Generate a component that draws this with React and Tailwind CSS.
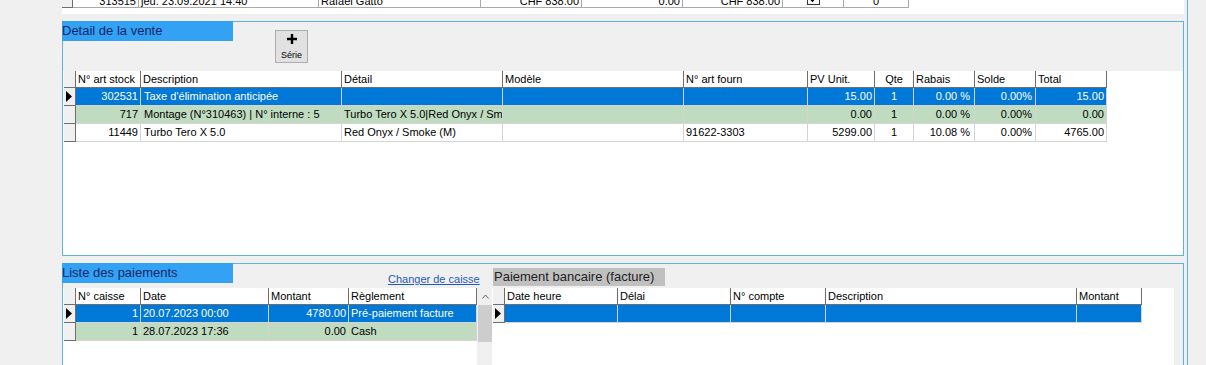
import React from 'react';

const Arrow = () => (
  <svg width="6" height="11" viewBox="0 0 6 11" className="block">
    <path d="M0 0L6 5.5L0 11Z" fill="#000" />
  </svg>
);

const RowMark = ({ mark }) => (
  <div className="w-[12px] h-[18px] shrink-0 bg-[#f0f0f0] border-r border-b border-[#6e6e6e] flex items-center pl-[2px]">
    {mark && <Arrow />}
  </div>
);

const Grid = ({ cols, rows }) => (
  <div className="pl-px">
    <div className="flex w-fit h-[17px]">
      <div className="w-[12px] shrink-0 bg-[#f0f0f0] border-r border-b border-[#6e6e6e]" />
      {cols.map((c) => (
        <div
          key={c.label}
          className={`${c.w} shrink-0 border-r border-b border-[#6e6e6e] bg-white px-[2px] leading-[16px] overflow-hidden whitespace-nowrap ${c.head || ''}`}
        >
          {c.label}
        </div>
      ))}
    </div>
    {rows.map((r, i) => (
      <div key={i} className={`flex w-fit h-[18px] ${r.bg}`}>
        <RowMark mark={r.mark} />
        {cols.map((c, j) => (
          <div
            key={j}
            className={`${c.w} shrink-0 border-r border-b border-[#d4d4d4] px-[2px] leading-[17px] overflow-hidden whitespace-nowrap ${c.align || ''}`}
          >
            {r.cells[j]}
          </div>
        ))}
      </div>
    ))}
  </div>
);

const detailCols = [
  { label: 'N° art stock', w: 'w-[65px]', align: 'text-right' },
  { label: 'Description', w: 'w-[201px]', align: 'pl-[3px]' },
  { label: 'Détail', w: 'w-[161px]' },
  { label: 'Modèle', w: 'w-[181px]' },
  { label: 'N° art fourn', w: 'w-[124px]' },
  { label: 'PV Unit.', w: 'w-[67px]', align: 'text-right' },
  { label: 'Qte', w: 'w-[39px]', align: 'text-center', head: 'text-center' },
  { label: 'Rabais', w: 'w-[61px]', align: 'text-right pr-[4px]' },
  { label: 'Solde', w: 'w-[61px]', align: 'text-right pr-[3px]' },
  { label: 'Total', w: 'w-[71px]', align: 'text-right' },
];

const detailRows = [
  {
    bg: 'bg-[#0078d7] text-white',
    mark: true,
    cells: ['302531', "Taxe d'élimination anticipée", '', '', '', '15.00', '1', '0.00 %', '0.00%', '15.00'],
  },
  {
    bg: 'bg-[#c0dcc0]',
    cells: ['717', 'Montage (N°310463) | N° interne : 5', 'Turbo Tero X 5.0|Red Onyx / Smoke (M)', '', '', '0.00', '1', '0.00 %', '0.00%', '0.00'],
  },
  {
    bg: 'bg-white',
    cells: ['11449', 'Turbo Tero X 5.0', 'Red Onyx / Smoke (M)', '', '91622-3303', '5299.00', '1', '10.08 %', '0.00%', '4765.00'],
  },
];

const payCols = [
  { label: 'N° caisse', w: 'w-[65px]', align: 'text-right' },
  { label: 'Date', w: 'w-[128px]' },
  { label: 'Montant', w: 'w-[80px]', align: 'text-right' },
  { label: 'Règlement', w: 'w-[128px]' },
];

const payRows = [
  { bg: 'bg-[#0078d7] text-white', mark: true, cells: ['1', '20.07.2023 00:00', '4780.00', 'Pré-paiement facture'] },
  { bg: 'bg-[#c0dcc0]', cells: ['1', '28.07.2023 17:36', '0.00', 'Cash'] },
];

const bankCols = [
  { label: 'Date heure', w: 'w-[113px]' },
  { label: 'Délai', w: 'w-[113px]' },
  { label: 'N° compte', w: 'w-[95px]' },
  { label: 'Description', w: 'w-[251px]' },
  { label: 'Montant', w: 'w-[65px]' },
];

const bankRows = [{ bg: 'bg-[#0078d7] text-white', mark: true, cells: ['', '', '', '', ''] }];

const TopRow = () => (
  <div className="h-[14px] shrink-0 w-[1122px] bg-white overflow-hidden">
    <div className="-mt-[10px] flex w-fit h-[18px]">
      <div className="w-[11px] shrink-0 bg-[#f0f0f0] border-r border-b border-[#6e6e6e]" />
      {[
        ['w-[66px] text-right', '313515'],
        ['w-[180px]', 'jeu. 23.09.2021 14:40'],
        ['w-[162px]', 'Rafael Gatto'],
        ['w-[101px] text-right', 'CHF 838.00'],
        ['w-[101px] text-right', '0.00'],
        ['w-[100px] text-right', 'CHF 838.00'],
      ].map(([cls, txt], i) => (
        <div key={i} className={`${cls} shrink-0 border-r border-b border-[#a9a9a9] px-[2px] pt-[3px] leading-[17px] overflow-hidden whitespace-nowrap`}>
          {txt}
        </div>
      ))}
      <div className="w-[61px] shrink-0 border-r border-b border-[#a9a9a9] flex justify-center pt-[2px]">
        <svg width="13" height="13" viewBox="0 0 13 13">
          <rect x="0.5" y="0.5" width="12" height="12" fill="#fff" stroke="#333" />
          <path d="M3 6.5L5.5 9L10 3.5" fill="none" stroke="#000" strokeWidth="1.6" />
        </svg>
      </div>
      <div className="w-[65px] shrink-0 border-r border-b border-[#a9a9a9] text-center pt-[3px] leading-[17px] overflow-hidden">0</div>
    </div>
  </div>
);

export default function App() {
  return (
    <div className="w-[1206px] h-[365px] overflow-hidden bg-[#f0f0f0] font-['Liberation_Sans',Arial,sans-serif] text-[11px] text-black">
      <div className="ml-[62px] w-[1126px] h-full border-r border-[#62b0dc] flex flex-col">
        <TopRow />
        <div className="h-[7px] shrink-0" />

        {/* Detail de la vente */}
        <div className="w-[1122px] h-[235px] shrink-0 border border-[#62b0dc] flex flex-col">
          <div className="flex items-start">
            <div className="-mt-px -ml-px w-[171px] h-[20px] bg-[#33a2f4] text-[13px] leading-[20px] text-[#132766]">
              Detail de la vente
            </div>
            <button className="ml-[42px] mt-[8px] w-[33px] h-[33px] bg-[#e1e1e1] border border-[#adadad] flex flex-col items-center pt-[3px]">
              <svg width="10" height="10" viewBox="0 0 10 10">
                <path d="M5 0V10M0 5H10" stroke="#000" strokeWidth="2.4" />
              </svg>
              <span className="text-[9px] leading-[11px] mt-[6px]">Série</span>
            </button>
          </div>
          <div className="mt-[8px] flex-1 bg-white">
            <Grid cols={detailCols} rows={detailRows} />
          </div>
        </div>

        <div className="h-[7px] shrink-0" />

        {/* Liste des paiements / Paiement bancaire */}
        <div className="w-[1122px] h-[130px] shrink-0 border border-[#62b0dc] flex">
          <div className="w-[430px] shrink-0 flex flex-col">
            <div className="flex items-start">
              <div className="-mt-px -ml-px w-[171px] h-[20px] bg-[#33a2f4] text-[13px] leading-[20px] text-[#132766]">
                Liste des paiements
              </div>
              <a className="ml-[155px] mt-[8px] text-[11px] leading-[14px] text-[#1f5bb8] underline">
                Changer de caisse
              </a>
            </div>
            <div className="mt-[2px] flex-1 flex">
              <div className="w-[414px] bg-white">
                <Grid cols={payCols} rows={payRows} />
              </div>
              <div className="w-[16px] bg-[#f0f0f0] flex flex-col">
                <div className="h-[17px] flex items-center justify-center">
                  <svg width="7" height="5" viewBox="0 0 7 5">
                    <path d="M0.5 4.5L3.5 1L6.5 4.5" fill="none" stroke="#606060" />
                  </svg>
                </div>
                <div className="mx-px h-[37px] bg-[#cdcdcd]" />
              </div>
            </div>
          </div>

          <div className="w-[681px] shrink-0 flex flex-col">
            <div className="mt-[4px] w-[172px] h-[18px] bg-[#c0c0c0] text-[13px] leading-[18px] text-[#222] pl-px">
              Paiement bancaire (facture)
            </div>
            <div className="mt-[2px] flex-1 bg-white -ml-px">
              <Grid cols={bankCols} rows={bankRows} />
            </div>
          </div>
        </div>
      </div>
    </div>
  );
}
